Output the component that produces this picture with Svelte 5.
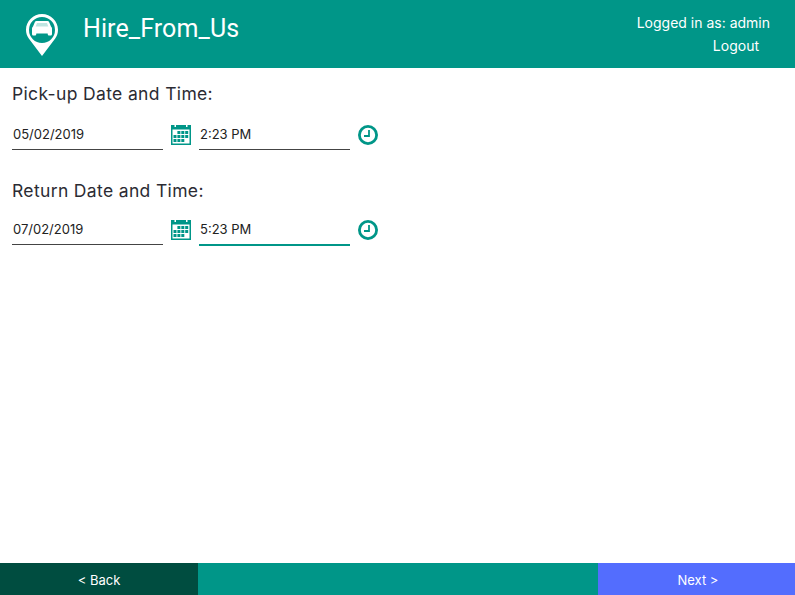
<script lang="ts">
  let pickupDate = '05/02/2019';
  let pickupTime = '2:23 PM';
  let returnDate = '07/02/2019';
  let returnTime = '5:23 PM';

  // first row starts one cell in, last row stops one cell short
  const calendarCells = [
    [1, 2, 3],
    [0, 1, 2, 3],
    [0, 1, 2]
  ];
</script>

{#snippet calendar()}
  <svg class="icon" viewBox="0 0 20 20" width="20" height="20" aria-hidden="true">
    <path fill="#009688" d="M0 0h3.500v2h1.500V0h10v2h1.500V0H20v20H0z" />
    <rect x="1.500" y="4.500" width="17" height="14" fill="#fff" />
    <g fill="#009688">
      {#each calendarCells as cells, r}
        {#each cells as c}
          <rect x={2.5 + c * 3.9} y={6 + r * 4} width="3" height="3" />
        {/each}
      {/each}
    </g>
  </svg>
{/snippet}

{#snippet clock()}
  <svg class="icon" viewBox="0 0 20 20" width="20" height="20" aria-hidden="true">
    <circle cx="10" cy="10" r="8.600" fill="none" stroke="#009688" stroke-width="2.800" />
    <path d="M11 5v6H6" fill="none" stroke="#009688" stroke-width="1.800" />
  </svg>
{/snippet}

<div class="page">
  <header>
    <div class="brand">
      <svg class="logo" viewBox="0 0 32 42" width="32" height="42" aria-hidden="true">
        <path fill="#fff" fill-rule="evenodd" d="M16 0C7.200 0 0 7.100 0 15.800c0 3.400 1 6.200 2.800 8.800L16 42l13.200-17.400c1.800-2.600 2.800-5.400 2.800-8.800C32 7.100 24.800 0 16 0zM16 3a13 13 0 1 0 0 26a13 13 0 1 0 0-26z" />
        <path fill="#fff" d="M10.500 7h11c.8 0 1.400.4 1.700 1.200L25 12.500c.7.5 1 1.200 1 2V20c0 .8-.5 1.500-1.300 1.500H23c-.8 0-1.300-.6-1.300-1.500v-.5H10.300v.5c0 .9-.5 1.500-1.300 1.500H7.300C6.500 21.500 6 20.800 6 20v-5.500c0-.8.3-1.500 1-2l1.800-4.300C9.100 7.400 9.700 7 10.500 7z" />
        <path fill="#009688" fill-opacity=".25" d="M11 9h10l1.300 3.500H9.700z" />
      </svg>
      <span class="title">Hire_From_Us</span>
    </div>
    <div class="user">
      <div>Logged in as: admin</div>
      <a href="#logout" class="logout">Logout</a>
    </div>
  </header>

  <main>
    <section>
      <h2>Pick-up Date and Time:</h2>
      <div class="row">
        <input type="text" bind:value={pickupDate} />
        {@render calendar()}
        <input type="text" bind:value={pickupTime} />
        {@render clock()}
      </div>
    </section>

    <section class="return">
      <h2>Return Date and Time:</h2>
      <div class="row">
        <input type="text" bind:value={returnDate} />
        {@render calendar()}
        <input type="text" class="focused" bind:value={returnTime} />
        {@render clock()}
      </div>
    </section>
  </main>

  <footer>
    <button class="back">&lt; Back</button>
    <button class="next">Next &gt;</button>
  </footer>
</div>

<style>
  :global(body) {
    margin: 0;
    font-family: Inter, "Liberation Sans", sans-serif;
    background: #fff;
  }

  .page {
    display: flex;
    flex-direction: column;
    height: 595px;
    overflow: hidden;
  }

  header {
    display: flex;
    justify-content: space-between;
    height: 68px;
    flex: none;
    background: #009688;
    color: #fff;
  }

  .brand {
    display: flex;
    align-items: flex-start;
    padding: 14px 0 0 26px;
  }

  .logo {
    display: block;
    flex: none;
  }

  .title {
    margin-left: 25px;
    font-family: Roboto, sans-serif;
    font-size: 25px;
    letter-spacing: 0.1px;
    line-height: 30px;
  }

  .user {
    display: flex;
    flex-direction: column;
    align-items: flex-end;
    gap: 5px;
    padding: 14px 25px 0 0;
    font-size: 14px;
    line-height: 18px;
  }

  .logout {
    margin-right: 11px;
    color: #fff;
    text-decoration: none;
  }

  main {
    flex: 1;
    padding: 15px 12px 0;
  }

  section {
    margin-bottom: 28px;
  }

  h2 {
    margin: 0 0 16px;
    font-size: 17.500px;
    font-weight: 400;
    letter-spacing: 0.35px;
    line-height: 22px;
    color: #2b2b33;
  }

  .return {
    padding-top: 2px;
  }

  .return h2 {
    margin-bottom: 14px;
  }

  .row {
    display: flex;
    align-items: center;
    gap: 8px;
    height: 29px;
  }

  input {
    box-sizing: border-box;
    width: 151px;
    height: 29px;
    padding: 0 1px 2px;
    border: none;
    border-bottom: 1px solid #444;
    outline: none;
    background: transparent;
    font-family: inherit;
    font-size: 13px;
    color: #222;
  }

  input.focused {
    border-bottom-color: #009688;
    box-shadow: 0 1px 0 #009688;
  }

  .icon {
    display: block;
    flex: none;
    margin-top: -1px;
  }

  footer {
    display: flex;
    justify-content: space-between;
    height: 32px;
    flex: none;
    background: #009688;
  }

  footer button {
    border: none;
    padding: 1px 0 0;
    color: #fff;
    font-family: inherit;
    font-size: 13px;
  }

  .back {
    width: 198px;
  }

  footer .back {
    background: #004d40;
  }

  footer .next {
    width: 197px;
    padding-left: 3px;
    background: #536dfe;
  }
</style>
